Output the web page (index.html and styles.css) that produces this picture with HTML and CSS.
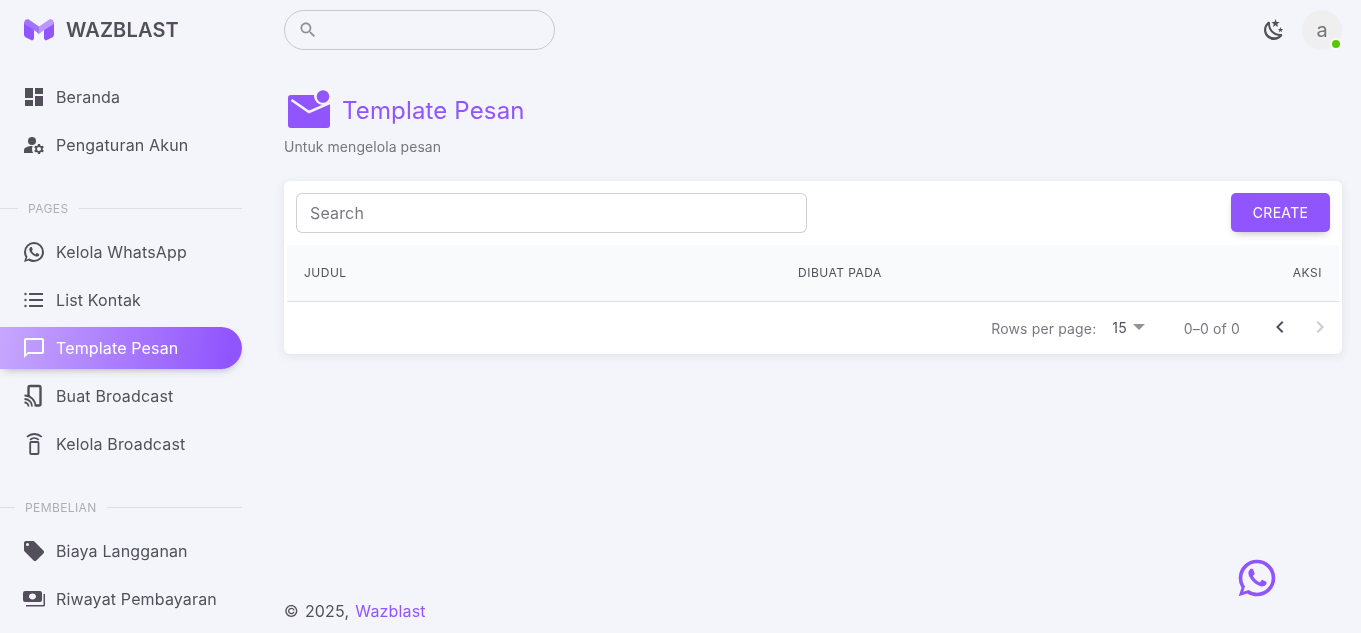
FILE: index.html
```html
<!DOCTYPE html>
<html lang="id">
<head>
<meta charset="utf-8">
<title>Template Pesan - Wazblast</title>
<link rel="stylesheet" href="styles.css">
</head>
<body>
<div class="layout">
  <aside class="sidebar">
    <div class="brand">
      <svg class="logo" viewBox="0 0 30 22"><path fill="#9155FD" d="M0 3l10 7v10l-2 1.500-7-3.500-1-2zM30 3l-10 7v10l2 1.500 7-3.500 1-2z"/><path fill="#A274FD" d="M1 1l3-1 11 7.500V15l-5-4L0 5z"/><path fill="#BB97FF" d="M29 1l-3-1-11 7.500V15l5-4 10-6z"/></svg>
      <span class="brand-name">WAZBLAST</span>
    </div>
    <nav class="nav">
      <a class="item"><svg class="ic" viewBox="0 0 24 24"><path d="M3 13h8V3H3v10zm0 8h8v-6H3v6zm10 0h8V11h-8v10zm0-18v6h8V3h-8z"/></svg>Beranda</a>
      <a class="item"><svg class="ic" viewBox="0 0 24 24"><circle cx="10" cy="8" r="4"/><path d="M10.670 13.020C10.450 13.010 10.230 13 10 13c-2.420 0-4.680.67-6.610 1.820C2.510 15.340 2 16.320 2 17.350V20h9.260C10.470 18.870 10 17.490 10 16c0-1.070.25-2.070.67-2.980z"/><path d="M20.750 16c0-.22-.03-.42-.06-.63l1.140-1.010-1-1.730-1.450.49c-.32-.27-.68-.48-1.080-.63L18 11h-2l-.3 1.490c-.4.15-.76.36-1.080.63l-1.450-.49-1 1.730 1.140 1.010c-.03.21-.06.41-.06.63s.03.42.06.63l-1.140 1.010 1 1.730 1.450-.49c.32.27.68.48 1.080.63L16 21h2l.3-1.490c.4-.15.76-.36 1.080-.63l1.450.49 1-1.730-1.140-1.010c.03-.21.06-.41.06-.63zM17 18c-1.100 0-2-.9-2-2s.9-2 2-2 2 .9 2 2-.9 2-2 2z"/></svg>Pengaturan Akun</a>

      <div class="section s-pages"><span class="rule r-pages"></span><span class="label">PAGES</span><span class="rule grow"></span></div>
      <a class="item"><svg class="ic" viewBox="0 0 24 24"><path d="M16.750 13.960c.25.13.41.2.46.3.06.11.04.61-.21 1.180-.2.56-1.240 1.100-1.700 1.120-.46.02-.47.36-2.960-.73-2.490-1.090-3.990-3.750-4.110-3.920-.12-.17-.96-1.380-.92-2.610.05-1.220.69-1.800.95-2.040.24-.26.51-.29.68-.26h.47c.15 0 .36-.06.55.45l.69 1.870c.06.13.1.28.01.44l-.27.41-.39.42c-.12.12-.26.25-.12.5.12.26.62 1.090 1.320 1.780.91.88 1.710 1.170 1.950 1.300.24.14.39.12.54-.04l.81-.94c.19-.25.35-.19.58-.11l1.670.88M12 2a10 10 0 0 1 10 10 10 10 0 0 1-10 10c-1.970 0-3.800-.57-5.350-1.550L2 22l1.550-4.650A9.969 9.969 0 0 1 2 12 10 10 0 0 1 12 2m0 2a8 8 0 0 0-8 8c0 1.720.54 3.310 1.460 4.610L4.500 19.500l2.890-.96A7.950 7.950 0 0 0 12 20a8 8 0 0 0 8-8 8 8 0 0 0-8-8z"/></svg>Kelola WhatsApp</a>
      <a class="item"><svg class="ic" viewBox="0 0 24 24"><circle cx="3.500" cy="6" r="1.200"/><circle cx="3.500" cy="12" r="1.200"/><circle cx="3.500" cy="18" r="1.200"/><path d="M7 5h14v2H7zM7 11h14v2H7zM7 17h14v2H7z"/></svg>List Kontak</a>
      <a class="item active"><svg class="ic" viewBox="0 0 24 24"><path d="M20 2H4c-1.100 0-2 .9-2 2v18l4-4h14c1.100 0 2-.9 2-2V4c0-1.100-.9-2-2-2zm0 14H6l-2 2V4h16v12z"/></svg>Template Pesan</a>
      <a class="item"><svg class="ic line" viewBox="0 0 24 24"><path class="thick" d="M6.500 12V3.500A1.500 1.500 0 0 1 8 2h9a1.500 1.500 0 0 1 1.500 1.500V20a1.500 1.500 0 0 1-1.500 1.500h-3"/><path d="M2.500 18.500a4 4 0 0 1 4 4M2.500 15a7.500 7.500 0 0 1 7.500 7.500M2.500 11.500a11 11 0 0 1 11 11"/></svg>Buat Broadcast</a>
      <a class="item"><svg class="ic line" viewBox="0 0 24 24"><rect x="8.200" y="10" width="8.300" height="12" rx="1"/><path d="M8 7.800a6.500 6.500 0 0 1 8.700 0M5 4.800a11 11 0 0 1 14.700 0"/></svg>Kelola Broadcast</a>

      <div class="section s-buy"><span class="rule r-buy"></span><span class="label">PEMBELIAN</span><span class="rule grow"></span></div>
      <a class="item"><svg class="ic" viewBox="0 0 24 24"><path fill-rule="evenodd" d="M5.500 7A1.500 1.500 0 1 1 5.500 4a1.500 1.500 0 0 1 0 3zM21.410 11.580l-9-9C12.050 2.220 11.550 2 11 2H4C2.890 2 2 2.890 2 4v7c0 .55.22 1.050.59 1.410l8.990 9c.37.36.87.59 1.420.59s1.050-.23 1.410-.59l7-7c.37-.36.59-.86.59-1.410 0-.56-.23-1.060-.59-1.420z"/></svg>Biaya Langganan</a>
      <a class="item"><svg class="ic" viewBox="0 0 24 24"><path fill-rule="evenodd" d="M3 4h15a2 2 0 0 1 2 2v7a2 2 0 0 1-2 2H3a2 2 0 0 1-2-2V6a2 2 0 0 1 2-2zm7.500 2.600C8.600 6.600 7 7.900 7 9.500s1.600 2.900 3.500 2.900 3.500-1.300 3.500-2.900-1.600-2.900-3.500-2.900z"/><path d="M21.500 7H23v11a1.500 1.500 0 0 1-1.500 1.500H4V18h17.500z"/></svg>Riwayat Pembayaran</a>
    </nav>
  </aside>

  <div class="main">
    <header class="topbar">
      <div class="search">
        <svg class="search-ic" viewBox="0 0 24 24"><path d="M15.500 14h-.79l-.28-.27C15.410 12.590 16 11.110 16 9.500 16 5.910 13.090 3 9.500 3S3 5.910 3 9.500 5.910 16 9.500 16c1.610 0 3.090-.59 4.230-1.570l.27.28v.79l5 4.990L20.490 19l-4.990-5zm-6 0C7.010 14 5 11.990 5 9.500S7.010 5 9.500 5 14 7.010 14 9.500 11.990 14 9.500 14z"/></svg>
      </div>
      <div class="top-right">
        <svg class="moon" viewBox="0 0 24 24"><path d="M17.750 4.090l-2.530 1.940.91 3.060-2.630-1.810-2.630 1.810.91-3.060-2.530-1.940L12.440 4l1.060-3 1.060 3 3.190.09zM21.250 11l-1.640 1.250.59 1.980-1.700-1.170-1.700 1.170.59-1.980L15.750 11l2.060-.05L18.500 9l.69 1.950 2.060.05zM18.970 15.950c.83-.08 1.720 1.100 1.190 1.850-.32.45-.66.87-1.080 1.270-3.910 3.930-10.240 3.930-14.140 0-3.910-3.900-3.910-10.240 0-14.140.4-.4.82-.76 1.270-1.080.75-.53 1.930.36 1.850 1.190-.27 2.860.69 5.830 2.890 8.020 2.190 2.200 5.150 3.160 8.020 2.890zm-1.840 1.940c-2.840-.18-5.630-1.390-7.600-3.390-2.030-2-3.240-4.790-3.420-7.630-2.610 2.920-2.550 7.380.25 10.190 2.820 2.770 7.270 2.830 10.770.83z"/></svg>
        <div class="avatar">a<span class="dot"></span></div>
      </div>
    </header>

    <section class="page-head">
      <div class="title-row">
        <svg class="title-ic" viewBox="0 0 42 38"><path fill="#9155FD" d="M3 5h36a3 3 0 0 1 3 3v27a3 3 0 0 1-3 3H3a3 3 0 0 1-3-3V8a3 3 0 0 1 3-3z"/><path fill="none" stroke="#F4F5FA" stroke-width="2.500" d="M3.500 10l17.500 12 21-9"/><circle cx="35" cy="6" r="9" fill="#F4F5FA"/><circle cx="35" cy="6.500" r="6.300" fill="#9155FD"/></svg>
        <h1 class="title">Template Pesan</h1>
      </div>
      <p class="subtitle">Untuk mengelola pesan</p>
    </section>

    <section class="card">
      <div class="toolbar">
        <input class="field" type="text" placeholder="Search">
        <button class="create">CREATE</button>
      </div>
      <div class="thead">
        <span>JUDUL</span>
        <span>DIBUAT PADA</span>
        <span>AKSI</span>
      </div>
      <div class="pager">
        <span class="rows-label">Rows per page:</span>
        <span class="rows-val">15<svg class="caret" viewBox="0 0 12 6"><path d="M0 0h12L6 6z"/></svg></span>
        <span class="range">0–0 of 0</span>
        <svg class="chev" viewBox="0 0 24 24"><path d="M15.410 7.410 14 6l-6 6 6 6 1.410-1.410L10.830 12z"/></svg>
        <svg class="chev off" viewBox="0 0 24 24"><path d="M10 6 8.590 7.410 13.170 12l-4.580 4.590L10 18l6-6z"/></svg>
      </div>
    </section>

    <footer class="footer">© 2025, <a class="foot-link">Wazblast</a></footer>
    <svg class="float-wa" viewBox="0 0 24 24"><path d="M16.750 13.960c.25.13.41.2.46.3.06.11.04.61-.21 1.180-.2.56-1.240 1.100-1.700 1.120-.46.02-.47.36-2.960-.73-2.490-1.090-3.990-3.750-4.110-3.920-.12-.17-.96-1.380-.92-2.610.05-1.220.69-1.800.95-2.040.24-.26.51-.29.68-.26h.47c.15 0 .36-.06.55.45l.69 1.870c.06.13.1.28.01.44l-.27.41-.39.42c-.12.12-.26.25-.12.5.12.26.62 1.090 1.320 1.780.91.88 1.710 1.170 1.950 1.300.24.14.39.12.54-.04l.81-.94c.19-.25.35-.19.58-.11l1.670.88M12 2a10 10 0 0 1 10 10 10 10 0 0 1-10 10c-1.970 0-3.800-.57-5.350-1.550L2 22l1.550-4.650A9.969 9.969 0 0 1 2 12 10 10 0 0 1 12 2m0 2a8 8 0 0 0-8 8c0 1.720.54 3.310 1.460 4.610L4.500 19.500l2.890-.96A7.950 7.950 0 0 0 12 20a8 8 0 0 0 8-8 8 8 0 0 0-8-8z"/></svg>
  </div>
</div>
</body>
</html>
```

FILE: styles.css
```css
* { box-sizing: border-box; }
html, body { margin: 0; height: 100%; overflow: hidden; }
body {
  background: #F4F5FA;
  color: rgba(58, 53, 65, 0.87);
  font-family: Inter, "Liberation Sans", sans-serif;
  font-size: 16px;
}
.layout { display: flex; height: 633px; overflow: hidden; will-change: transform; }

/* sidebar */
.sidebar { width: 260px; flex: none; padding-right: 18px; }
.brand { height: 60px; display: flex; align-items: center; padding-left: 24px; gap: 12px; }
.logo { width: 30px; height: 22px; }
.brand-name { font-size: 20px; font-weight: 600; letter-spacing: 0.15px; line-height: 24px; }
.nav { display: flex; flex-direction: column; padding-top: 10px; }
.item {
  height: 42px;
  margin-top: 6px;
  padding-left: 22px;
  display: flex;
  align-items: center;
  gap: 10px;
  border-radius: 0 21px 21px 0;
  letter-spacing: 0.15px;
  line-height: 24px;
}
.ic { width: 24px; height: 24px; flex: none; fill: rgba(58, 53, 65, 0.87); }
.ic.line { fill: none; stroke: rgba(58, 53, 65, 0.87); stroke-width: 1.800; }
.ic.line .thick { stroke-width: 2.400; }
.item.active {
  color: #fff;
  background: linear-gradient(98deg, #C6A7FE, #9155FD 94%);
  box-shadow: 0 4px 8px -4px rgba(58, 53, 65, 0.42);
}
.item.active .ic { fill: #fff; }
.section { display: flex; align-items: center; height: 18px; }
.s-pages { margin-top: 34px; margin-bottom: 7px; }
.s-buy { margin-top: 34px; margin-bottom: 7px; }
.rule { height: 1px; margin-bottom: 1px; background: rgba(58, 53, 65, 0.12); flex: none; }
.r-pages { width: 18px; margin-right: 10px; }
.r-buy { width: 15px; margin-right: 10px; }
.rule.grow { flex: 1; margin-left: 10px; }
.label { font-size: 12px; letter-spacing: 0.4px; color: rgba(58, 53, 65, 0.38); line-height: 18px; }

/* main column */
.main { flex: 1; min-width: 0; padding: 0 19px 0 24px; display: flex; flex-direction: column; position: relative; }
.topbar { height: 60px; display: flex; align-items: center; justify-content: space-between; flex: none; }
.search {
  width: 271px;
  height: 40px;
  border: 1px solid rgba(58, 53, 65, 0.23);
  border-radius: 20px;
  display: flex;
  align-items: center;
  padding-left: 13px;
}
.search-ic { width: 20px; height: 20px; fill: rgba(58, 53, 65, 0.54); }
.top-right { display: flex; align-items: center; gap: 16px; }
.moon { width: 24px; height: 24px; fill: rgba(58, 53, 65, 0.87); }
.avatar {
  width: 40px;
  height: 40px;
  border-radius: 50%;
  background: #F0EFF0;
  color: rgba(58, 53, 65, 0.68);
  font-size: 20px;
  display: flex;
  align-items: center;
  justify-content: center;
  position: relative;
}
.dot {
  position: absolute;
  right: 0;
  bottom: 0;
  width: 12px;
  height: 12px;
  border-radius: 50%;
  background: #56CA00;
  border: 2px solid #fff;
}

.page-head { padding-top: 30px; flex: none; }
.title-row { display: flex; align-items: center; gap: 13px; padding-left: 4px; height: 38px; }
.title-ic { width: 42px; height: 38px; flex: none; }
.title { margin: 4px 0 0 -1px; font-size: 24px; font-weight: 400; line-height: 32px; color: #9155FD; letter-spacing: 0.15px; }
.subtitle { margin: 9px 0 0; font-size: 14px; line-height: 20px; letter-spacing: 0.06px; color: rgba(58, 53, 65, 0.68); }

/* card */
.card {
  margin-top: 24px;
  background: #fff;
  border-radius: 6px;
  box-shadow: 0 2px 10px 0 rgba(58, 53, 65, 0.1);
  flex: none;
}
.toolbar { display: flex; justify-content: space-between; align-items: flex-start; padding: 12px; height: 64px; }
.field {
  width: 511px;
  height: 40px;
  border: 1px solid rgba(58, 53, 65, 0.23);
  border-radius: 6px;
  padding: 0 13px;
  font: inherit;
  letter-spacing: 0.15px;
  color: inherit;
  background: #fff;
  outline: none;
}
.field::placeholder { color: rgba(58, 53, 65, 0.68); opacity: 1; }
.create {
  width: 99px;
  height: 39px;
  border: 0;
  border-radius: 5px;
  background: #9155FD;
  color: #fff;
  font: inherit;
  font-size: 14px;
  letter-spacing: 0.3px;
  box-shadow: 0 4px 8px -4px rgba(58, 53, 65, 0.42);
}
.thead {
  height: 57px;
  margin: 0 3px;
  display: grid;
  grid-template-columns: 494px 1fr auto;
  align-items: center;
  padding: 0 17px;
  background: #F9FAFC;
  border-bottom: 1px solid rgba(58, 53, 65, 0.12);
  font-size: 12px;
  letter-spacing: 0.5px;
  line-height: 24px;
}
.pager {
  height: 52px;
  display: flex;
  align-items: center;
  justify-content: flex-end;
  padding-right: 10px;
  font-size: 14px;
  letter-spacing: 0.15px;
  color: rgba(58, 53, 65, 0.68);
}
.rows-val { color: rgba(58, 53, 65, 0.87); margin-left: 16px; display: flex; align-items: center; gap: 6px; margin-top: -2px; }
.caret { width: 12px; height: 6px; fill: rgba(58, 53, 65, 0.54); }
.range { margin-left: 39px; margin-right: 28px; }
.chev { width: 24px; height: 24px; fill: rgba(58, 53, 65, 0.87); margin-top: -2px; }
.chev.off { fill: rgba(58, 53, 65, 0.26); margin-left: 16px; }

.footer { margin-top: auto; height: 34px; letter-spacing: 0.15px; word-spacing: 1.500px; line-height: 24px; }
.foot-link { color: #9155FD; }
.float-wa { position: absolute; left: 975px; top: 556px; width: 44px; height: 44px; fill: #9155FD; }
```
